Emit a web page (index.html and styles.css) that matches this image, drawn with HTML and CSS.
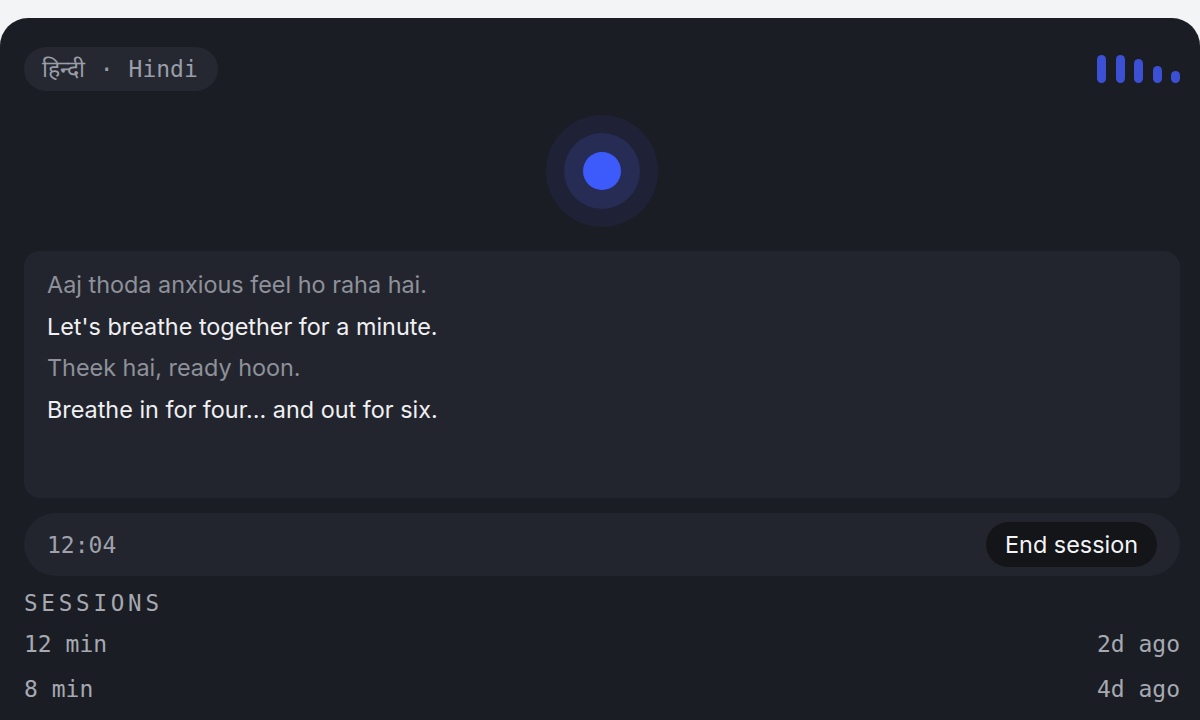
FILE: index.html
```html
<!DOCTYPE html>
<html lang="en">
<head>
<meta charset="utf-8">
<title>Session</title>
<link rel="stylesheet" href="styles.css">
</head>
<body>
<main class="card">
  <header class="top">
    <div class="lang">हिन्दी · Hindi</div>
    <div class="bars">
      <span class="bar b1"></span>
      <span class="bar b2"></span>
      <span class="bar b3"></span>
      <span class="bar b4"></span>
      <span class="bar b5"></span>
    </div>
  </header>
  <div class="orb-wrap">
    <div class="orb-outer"><div class="orb-mid"><div class="orb-core"></div></div></div>
  </div>
  <section class="transcript">
    <p class="line dim">Aaj thoda anxious feel ho raha hai.</p>
    <p class="line bright">Let's breathe together for a minute.</p>
    <p class="line dim">Theek hai, ready hoon.</p>
    <p class="line bright">Breathe in for four... and out for six.</p>
  </section>
  <div class="controls">
    <span class="timer">12:04</span>
    <button class="end">End session</button>
  </div>
  <section class="sessions">
    <div class="label">SESSIONS</div>
    <ul class="list">
      <li class="row"><span>12 min</span><span>2d ago</span></li>
      <li class="row"><span>8 min</span><span>4d ago</span></li>
    </ul>
  </section>
</main>
</body>
</html>
```

FILE: styles.css
```css
html, body {
  margin: 0;
  padding: 0;
}
body {
  background: #f3f4f6;
  padding-top: 18px;
  height: 720px;
  overflow: hidden;
  box-sizing: border-box;
}
.card {
  background: #1b1d24;
  border-radius: 28px 28px 0 0;
  padding: 29px 20px 40px 24px;
  min-height: 720px;
  box-sizing: border-box;
  font-family: Inter, "Noto Sans", sans-serif;
}
.top {
  display: flex;
  justify-content: space-between;
  align-items: center;
}
.lang {
  height: 44px;
  line-height: 44px;
  padding: 0 20px 0 18px;
  border-radius: 22px;
  background: #252831;
  color: #9a9ea8;
  font-family: "DejaVu Sans Mono", monospace;
  font-size: 23px;
  word-spacing: 1px;
}
.bars {
  display: flex;
  align-items: flex-end;
  gap: 9.5px;
  height: 28px;
}
.bar {
  width: 9px;
  border-radius: 5px;
  background: #3b50d4;
}
.b1 { height: 28px; }
.b2 { height: 28px; }
.b3 { height: 24px; }
.b4 { height: 17px; }
.b5 { height: 12px; }
.orb-wrap {
  display: flex;
  justify-content: center;
  margin-top: 24px;
}
.orb-outer {
  width: 112px;
  height: 112px;
  border-radius: 50%;
  background: #1f2236;
  display: flex;
  align-items: center;
  justify-content: center;
}
.orb-mid {
  width: 76px;
  height: 76px;
  border-radius: 50%;
  background: #262c53;
  display: flex;
  align-items: center;
  justify-content: center;
}
.orb-core {
  width: 38px;
  height: 38px;
  border-radius: 50%;
  background: #3d5bfb;
}
.transcript {
  margin-top: 24px;
  height: 247px;
  box-sizing: border-box;
  padding: 13px 23px;
  background: #23252e;
  border-radius: 16px;
}
.line {
  margin: 0;
  font-size: 23.4px;
  line-height: 41.5px;
}
.dim { color: #8e9199; }
.bright { color: #eff0f2; }
.controls {
  margin-top: 15px;
  height: 63px;
  border-radius: 32px;
  background: #23252e;
  display: flex;
  align-items: center;
  justify-content: space-between;
  padding: 0 23px;
}
.timer {
  font-family: "DejaVu Sans Mono", monospace;
  font-size: 23px;
  color: #9fa2ab;
}
.end {
  height: 45px;
  padding: 0 19px;
  border: none;
  border-radius: 23px;
  background: #141519;
  color: #f3f4f6;
  font-family: Inter, "Noto Sans", sans-serif;
  font-size: 23.4px;
}
.sessions {
  margin-top: 14px;
  font-family: "DejaVu Sans Mono", monospace;
  color: #a6a9b1;
}
.label {
  font-size: 22.5px;
  line-height: 26px;
  letter-spacing: 3.8px;
}
.list {
  list-style: none;
  margin: 6px 0 0;
  padding: 0;
}
.row {
  display: flex;
  justify-content: space-between;
  height: 45px;
  line-height: 45px;
  font-size: 23px;
}
```
